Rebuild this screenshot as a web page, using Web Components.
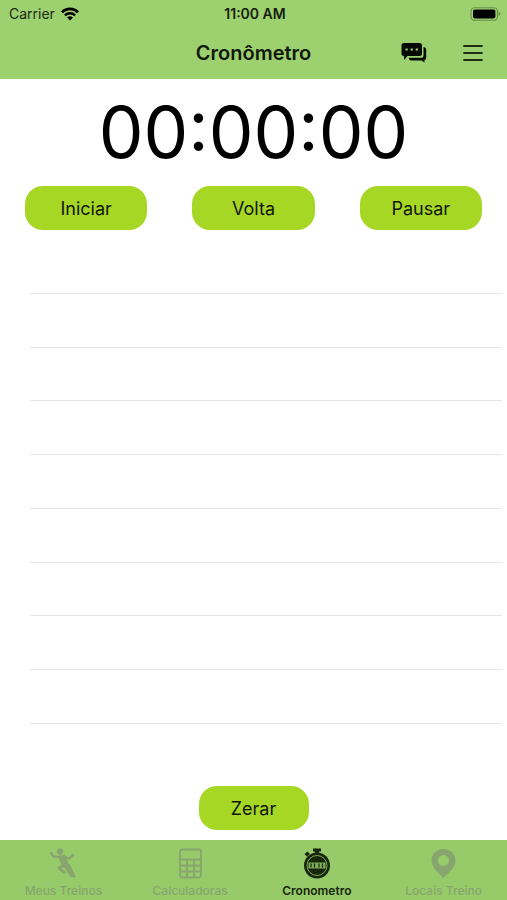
<!DOCTYPE html>
<html lang="pt-BR">
<head>
<meta charset="utf-8">
<meta name="viewport" content="width=device-width, initial-scale=1">
<title>Cronômetro</title>
<style>
    html, body {
        height: 100%;
        margin: 0;
    }

    body {
        background: #fff;
        color: #000;
        font-family: Inter, "Liberation Sans", sans-serif;
    }
</style>
</head>
<body>
<stopwatch-app></stopwatch-app>

<script>
// Shared setup: every element gets an open shadow root with its own markup
class BaseElement extends HTMLElement {
    constructor() {
        super();
        this.attachShadow({ mode: "open" });

        const template = document.createElement("template");
        template.innerHTML = this.constructor.markup;
        this.shadowRoot.appendChild(template.content.cloneNode(true));
    }
}

class StatusBar extends BaseElement {
    static markup = `
        <style>
        :host {
            display: grid;
            grid-template-columns: 1fr auto 1fr;
            align-items: center;
            height: 27px;
            padding: 0 6px 0 9px;
            font-size: 14px;
            line-height: 16px;
        }

        .carrier {
            display: flex;
            align-items: center;
            gap: 6px;
            color: #1c2a12;
        }

        .time {
            font-weight: 600;
            color: #15210d;
        }

        .battery {
            justify-self: end;
        }

        svg {
            display: block;
        }
        </style>
        <div class="carrier">
            <span>Carrier</span>
            <svg width="18" height="14" viewBox="0 0 18 14" fill="none" stroke="#000">
                <path d="M1 5.2a11.4 11.4 0 0 1 16 0" stroke-width="2.6"/>
                <path d="M3.9 8.3a7.2 7.2 0 0 1 10.2 0" stroke-width="2.4"/>
                <path d="M9 13.6 6.1 10.6a4.1 4.1 0 0 1 5.8 0z" fill="#000" stroke="none"/>
            </svg>
        </div>
        <div class="time">11:00 AM</div>
        <svg class="battery" width="31" height="14" viewBox="0 0 31 14">
            <rect x="1" y=".7" width="26.4" height="12.6" rx="3.6" fill="none" stroke="#6b9148" stroke-width="1.1"/>
            <rect x="3" y="2.6" width="22.4" height="8.8" rx="1.8"/>
            <path d="M28.7 4.8q1.7.6 1.7 2.2t-1.7 2.2z" fill="#6b9148"/>
        </svg>
    `;
}

class NavBar extends BaseElement {
    static markup = `
        <style>
        :host {
            display: grid;
            grid-template-columns: 1fr auto 1fr;
            align-items: center;
            height: 52px;
            padding: 0 22px;
        }

        h1 {
            grid-column: 2;
            margin: 0;
            font-size: 20px;
            font-weight: 600;
            line-height: 24px;
            color: #0f180a;
        }

        .actions {
            display: flex;
            justify-content: flex-end;
            align-items: center;
            gap: 34px;
        }

        button {
            padding: 0;
            border: 0;
            background: none;
            cursor: pointer;
        }

        svg {
            display: block;
        }
        </style>
        <h1><slot></slot></h1>
        <div class="actions">
            <button type="button" aria-label="Mensagens">
                <svg width="26" height="22" viewBox="0 0 26 22">
                    <path fill="#060a04" d="M3 1h15.500q2.500 0 2.500 2.500v8q0 2.500-2.500 2.500H6.500L3 18v-4Q.5 14 .5 11.500V3.500Q.5 1 3 1z"/>
                    <path fill="#060a04" d="M22.500 5q2.700.2 2.700 2.500v8q0 2.200-1.700 2.500v2.500L20.500 18.500H10q-2 0-2.200-2.700h12.700q2 0 2-2z"/>
                    <path fill="#9dd06f" d="M4.500 6.400h2.200v2.200H4.500zM9.600 6.400h2.200v2.200H9.600zM14.700 6.400h2.200v2.200h-2.200z"/>
                </svg>
            </button>
            <button type="button" aria-label="Menu">
                <svg width="24" height="22" viewBox="0 0 24 22" fill="none" stroke="#1c3010" stroke-width="1.8" stroke-linecap="round">
                    <path d="M3 4h18M3 11h18M3 18h18"/>
                </svg>
            </button>
        </div>
    `;
}

class PillButton extends BaseElement {
    static markup = `
        <style>
        :host {
            display: block;
        }

        button {
            display: block;
            box-sizing: border-box;
            width: 100%;
            height: 44px;
            padding: 2px 0 0;
            border: 0;
            border-radius: 18px;
            background: #a7d725;
            color: #10160a;
            font: inherit;
            font-size: 18px;
            line-height: 22px;
            cursor: pointer;
        }
        </style>
        <button type="button"><slot></slot></button>
    `;
}

class LapList extends BaseElement {
    static get observedAttributes() {
        return ["rows"];
    }

    static markup = `
        <style>
        :host {
            display: flex;
            flex-direction: column;
        }

        ul {
            flex: 1;
            display: flex;
            flex-direction: column;
            margin: 0;
            padding: 0;
            list-style: none;
        }

        li {
            flex: 1;
            box-sizing: border-box;
            border-bottom: 1px solid #e6e6e6;
        }
        </style>
        <ul></ul>
    `;

    attributeChangedCallback() {
        this.render();
    }

    render() {
        const list = this.shadowRoot.querySelector("ul");
        const rows = Number(this.getAttribute("rows")) || 0;

        list.innerHTML = "<li></li>".repeat(rows);
    }
}

class TabItem extends BaseElement {
    static markup = `
        <style>
        :host {
            display: block;
            flex: 1;
            color: #88a56f;
        }

        :host([active]) {
            color: #17260d;
        }

        a {
            display: flex;
            flex-direction: column;
            align-items: center;
            gap: 4px;
            color: inherit;
            text-decoration: none;
            font-size: 12px;
            font-weight: 500;
            line-height: 16px;
            white-space: nowrap;
        }

        :host([active]) a {
            font-weight: 600;
        }
        </style>
        <a href="#"><slot name="icon"></slot><span><slot></slot></span></a>
    `;
}

class TabBar extends BaseElement {
    static markup = `
        <style>
        :host {
            display: block;
            background: #97cb69;
        }

        nav {
            display: flex;
            height: 60px;
            box-sizing: border-box;
            padding-top: 7px;
        }
        </style>
        <nav><slot></slot></nav>
    `;
}

class StopwatchApp extends BaseElement {
    static markup = `
        <style>
        :host {
            display: flex;
            flex-direction: column;
            min-height: 100vh;
        }

        header {
            background: #9dd06f;
        }

        main {
            flex: 1;
            display: flex;
            flex-direction: column;
        }

        .clock {
            margin-top: 9px;
            text-align: center;
            font-size: 71px;
            line-height: 88px;
        }

        .controls {
            display: grid;
            grid-template-columns: repeat(3, 1fr);
            gap: 45px;
            margin-top: 10px;
            padding: 0 25px;
        }

        lap-list {
            flex: 1;
            margin: 10px 5px 0 30px;
        }

        .reset {
            width: 110px;
            margin: 62px auto 10px;
        }

        svg {
            display: block;
        }
        </style>
        <header>
            <status-bar></status-bar>
            <nav-bar>Cronômetro</nav-bar>
        </header>
        <main>
            <div class="clock" role="timer">00:00:00</div>
            <div class="controls">
                <pill-button>Iniciar</pill-button>
                <pill-button>Volta</pill-button>
                <pill-button>Pausar</pill-button>
            </div>
            <lap-list rows="9"></lap-list>
            <pill-button class="reset">Zerar</pill-button>
        </main>
        <tab-bar>
            <tab-item>
                <svg slot="icon" width="32" height="32" viewBox="0 0 32 32" fill="none" stroke="currentColor" stroke-linecap="round" stroke-linejoin="round">
                    <circle cx="13" cy="4.5" r="3.2" fill="currentColor" stroke="none"/>
                    <path d="M4 6l2.500 3.500L13 10" stroke-width="2.4"/>
                    <path d="M17 9.500l5 2 4-3.500" stroke-width="2.4"/>
                    <path d="M12 9.500l5.500-1L21 17l-5 3z" fill="currentColor" stroke-width="1.5"/>
                    <path d="M16.500 18l-4.500 3 5 4.500" stroke-width="3"/>
                    <path d="M17 19l5-2 6.500 13h-4z" fill="currentColor" stroke-width="1"/>
                </svg>
                Meus Treinos
            </tab-item>
            <tab-item>
                <svg slot="icon" width="32" height="32" viewBox="0 0 32 32" fill="none" stroke="currentColor" stroke-width="1.8">
                    <rect x="6" y="2.500" width="21" height="28" rx="2.500"/>
                    <path d="M6.500 12.500H27M6.500 18.500H27M6.500 24.500H27M13 13v17M20 13v17"/>
                </svg>
                Calculadoras
            </tab-item>
            <tab-item active>
                <svg slot="icon" width="32" height="32" viewBox="0 0 32 32">
                    <path fill="currentColor" d="M12 1.500h8v3h-2v4h-4v-4h-2zM3.500 7l3-2.500 2.500 2.500-3 2.500z"/>
                    <circle cx="16" cy="18.500" r="13" fill="currentColor"/>
                    <circle cx="16" cy="18.500" r="10" fill="none" stroke="#7eac57" stroke-width="1"/>
                    <path fill="#7eac57" d="M7.500 15.500h17v6h-17z"/>
                    <path fill="none" stroke="currentColor" stroke-width="1.200" d="M10 16.500v4M13.500 16.500v4M18 16.500v4M21.500 16.500v4"/>
                </svg>
                Cronometro
            </tab-item>
            <tab-item>
                <svg slot="icon" width="32" height="32" viewBox="0 0 32 32">
                    <path fill="currentColor" fill-rule="evenodd" d="M15.500 2C8.500 2 3.500 7 3.500 13.500 3.500 20 9.500 25 15.500 31c6-6 12-11 12-17.500C27.500 7 22.500 2 15.500 2zm0 6a5.500 5.500 0 1 1 0 11 5.500 5.500 0 0 1 0-11z"/>
                </svg>
                Locais Treino
            </tab-item>
        </tab-bar>
    `;
}

// Register custom elements
customElements.define("status-bar", StatusBar);
customElements.define("nav-bar", NavBar);
customElements.define("pill-button", PillButton);
customElements.define("lap-list", LapList);
customElements.define("tab-item", TabItem);
customElements.define("tab-bar", TabBar);
customElements.define("stopwatch-app", StopwatchApp);
</script>
</body>
</html>
